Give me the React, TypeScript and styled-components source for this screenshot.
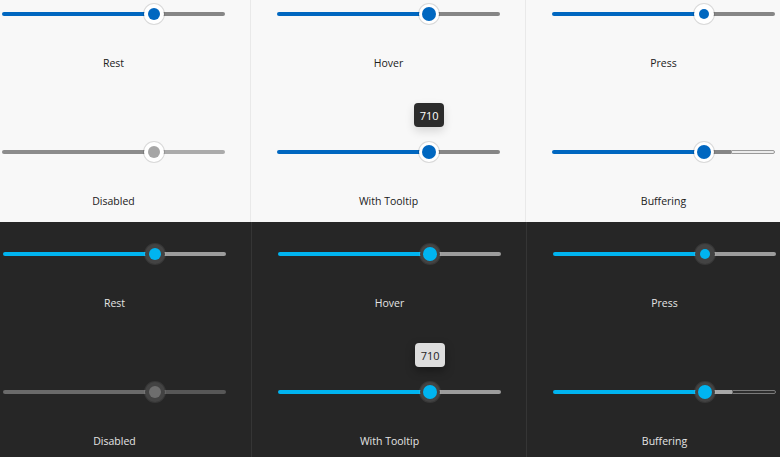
import React from 'react';
import styled, { createGlobalStyle, css } from 'styled-components';

const GlobalStyle = createGlobalStyle`
    html, body {
        margin: 0;
        padding: 0;
        width: 780px;
        height: 457px;
        overflow: hidden;
        font-family: "Open Sans", "Noto Sans", sans-serif;
    }
`;

type Mode = 'light' | 'dark';
type State = 'rest' | 'hover' | 'press' | 'disabled' | 'tooltip' | 'buffering';

const palette = {
    light: {
        bg: '#f8f8f8',
        divider: '#e9e9e9',
        text: '#202020',
        fill: '#0067c0',
        rail: '#868686',
        disabledFill: '#8c8c8c',
        disabledRail: '#ababab',
        thumbRing: '#ffffff',
        thumbEdge: 'rgba(0, 0, 0, 0.12)',
        disabledDot: '#a6a6a6',
        bufferBase: '#ececec',
        bufferEdge: '#9a9a9a',
        buffered: '#868686',
        tipBg: '#2c2c2c',
        tipText: '#ffffff',
    },
    dark: {
        bg: '#262626',
        divider: '#353535',
        text: '#e4e4e4',
        fill: '#00b4f0',
        rail: '#9c9c9c',
        disabledFill: '#6a6a6a',
        disabledRail: '#575757',
        thumbRing: '#434343',
        thumbEdge: 'rgba(255, 255, 255, 0.08)',
        disabledDot: '#6e6e6e',
        bufferBase: '#2e2e2e',
        bufferEdge: '#7a7a7a',
        buffered: '#a8a8a8',
        tipBg: '#dddddd',
        tipText: '#1e1e1e',
    },
};

const Page = styled.div`
    width: 780px;
    height: 457px;
    overflow: hidden;
    display: flex;
    flex-direction: column;
`;

const Section = styled.div<{ $mode: Mode; $height: number; $top: number; $shift: number }>`
    flex: none;
    height: ${(p) => p.$height}px;
    margin-top: ${(p) => p.$top}px;
    margin-left: ${(p) => p.$shift}px;
    width: 825px;
    background: ${(p) => palette[p.$mode].bg};
    display: grid;
    grid-template-columns: repeat(3, 275px);
    grid-template-rows: 138px 1fr;
    overflow: hidden;
`;

const Cell = styled.div<{ $mode: Mode; $col: number }>`
    display: flex;
    flex-direction: column;
    align-items: center;
    padding-top: 22px;
    border-left: ${(p) => (p.$col > 0 ? `1px solid ${palette[p.$mode].divider}` : 'none')};
    margin-left: ${(p) => (p.$col > 0 ? '-1px' : '0')};
`;

const SliderBox = styled.div`
    position: relative;
    width: 223px;
    height: 20px;
    display: flex;
    align-items: center;
`;

const Rail = styled.div`
    width: 100%;
    height: 4px;
    display: flex;
`;

const Segment = styled.div<{ $color: string; $edge?: string }>`
    height: 4px;
    box-sizing: border-box;
    background: ${(p) => p.$color};
    ${(p) => p.$edge && css`border: 1px solid ${p.$edge};`}
    &:first-child {
        border-radius: 2px 0 0 2px;
    }
    &:last-child {
        border-radius: 0 2px 2px 0;
    }
`;

const Thumb = styled.div<{ $ring: string; $edge: string }>`
    position: absolute;
    top: 0;
    width: 20px;
    height: 20px;
    margin-left: -10px;
    border-radius: 50%;
    box-sizing: border-box;
    background: ${(p) => p.$ring};
    box-shadow: 0 0 0 1px ${(p) => p.$edge};
    display: flex;
    align-items: center;
    justify-content: center;
`;

const Dot = styled.div<{ $size: number; $color: string }>`
    width: ${(p) => p.$size}px;
    height: ${(p) => p.$size}px;
    border-radius: 50%;
    background: ${(p) => p.$color};
`;

const Tip = styled.div<{ $mode: Mode }>`
    position: absolute;
    bottom: 35px;
    width: 30px;
    height: 24px;
    margin-left: -15px;
    border-radius: 4px;
    background: ${(p) => palette[p.$mode].tipBg};
    color: ${(p) => palette[p.$mode].tipText};
    font-size: 11px;
    display: flex;
    align-items: center;
    justify-content: center;
    box-shadow: 0 4px 10px rgba(0, 0, 0, ${(p) => (p.$mode === 'light' ? 0.14 : 0.35)});
`;

const Label = styled.div<{ $mode: Mode }>`
    margin-top: 31px;
    font-size: 10.5px;
    line-height: 16px;
    color: ${(p) => palette[p.$mode].text};
`;

const VALUE = 68.2;

const dotSize: Record<State, number> = {
    rest: 12,
    hover: 14,
    press: 10,
    disabled: 12,
    tooltip: 14,
    buffering: 14,
};

const Slider = ({ mode, state }: { mode: Mode; state: State }) => {
    const c = palette[mode];
    const disabled = state === 'disabled';
    const fill = disabled ? c.disabledFill : c.fill;
    const left = `${VALUE}%`;

    return (
        <SliderBox>
            <Rail>
                <Segment $color={fill} style={{ width: left }} />
                {state === 'buffering' ? (
                    <>
                        <Segment $color={c.buffered} style={{ width: '12%' }} />
                        <Segment $color={c.bufferBase} $edge={c.bufferEdge} style={{ flex: 1 }} />
                    </>
                ) : (
                    <Segment $color={disabled ? c.disabledRail : c.rail} style={{ flex: 1 }} />
                )}
            </Rail>
            <Thumb $ring={c.thumbRing} $edge={c.thumbEdge} style={{ left }}>
                <Dot $size={dotSize[state]} $color={disabled ? c.disabledDot : c.fill} />
            </Thumb>
            {state === 'tooltip' && (
                <Tip $mode={mode} style={{ left }}>
                    710
                </Tip>
            )}
        </SliderBox>
    );
};

const cells: { state: State; label: string }[] = [
    { state: 'rest', label: 'Rest' },
    { state: 'hover', label: 'Hover' },
    { state: 'press', label: 'Press' },
    { state: 'disabled', label: 'Disabled' },
    { state: 'tooltip', label: 'With Tooltip' },
    { state: 'buffering', label: 'Buffering' },
];

const Board = ({ mode }: { mode: Mode }) => {
    const light = mode === 'light';
    return (
        <Section $mode={mode} $height={light ? 240 : 235} $top={light ? -18 : 0} $shift={light ? -24 : -23}>
            {cells.map((cell, i) => (
                <Cell key={cell.state} $mode={mode} $col={i % 3}>
                    <Slider mode={mode} state={cell.state} />
                    <Label $mode={mode}>{cell.label}</Label>
                </Cell>
            ))}
        </Section>
    );
};

const App = () => (
    <>
        <GlobalStyle />
        <Page>
            <Board mode="light" />
            <Board mode="dark" />
        </Page>
    </>
);

export default App;
